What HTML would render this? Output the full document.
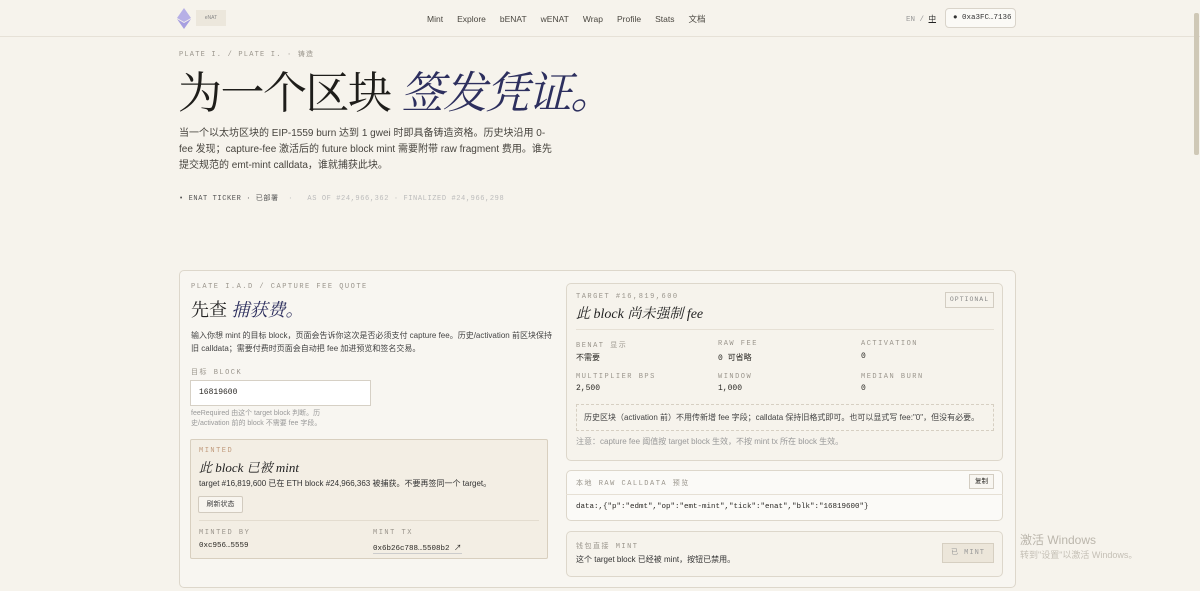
<!DOCTYPE html>
<html><head><meta charset="utf-8"><style>
*{box-sizing:border-box;margin:0;padding:0}
body{width:1200px;height:591px;overflow:hidden;background:#f6f3ec;font-family:"Liberation Sans","Noto Sans CJK SC",sans-serif;color:#2a2824;position:relative}
.mono{font-family:"Liberation Mono","Noto Sans CJK SC",monospace}
.serif{font-family:"Liberation Serif","Noto Serif CJK SC",serif}
.abs{position:absolute}
.lbl{font-family:"Liberation Mono","Noto Sans CJK SC",monospace;font-size:7px;letter-spacing:1.5px;color:#9a958c}
header{position:absolute;left:0;top:0;width:1200px;height:37px;border-bottom:1px solid #e6e1d7}
nav span{margin:0 7px;font-size:8.5px;color:#4a4740}
.card{position:absolute;border:1px solid #ddd7cb;border-radius:5px;background:#f6f3ec}
.v{font-size:8px;color:#2a2824}
</style></head><body>
<header>
<svg class="abs" style="left:177px;top:8px" width="14" height="21" viewBox="0 0 14 21"><polygon points="7,0 14,10 7,14 0,10" fill="#b7b0e6"/><polygon points="7,15 14,11 7,21 0,11" fill="#a79fe0"/></svg>
<div class="abs" style="left:196px;top:10px;width:30px;height:16px;background:#ece7dc;font-size:5px;color:#888;line-height:16px;text-align:center">eNAT</div>
<nav class="abs" style="left:420px;top:12px;line-height:12px"><span>Mint</span><span>Explore</span><span>bENAT</span><span>wENAT</span><span>Wrap</span><span>Profile</span><span>Stats</span><span>文档</span></nav>
<div class="abs mono" style="left:906px;top:13px;font-size:7.5px;color:#999">EN / <span style="color:#222;text-decoration:underline">中</span></div>
<div class="abs mono" style="left:945px;top:8px;width:71px;height:20px;border:1px solid #d9d4ca;border-radius:4px;background:#fbfaf6;font-size:7.5px;line-height:18px;padding-left:7px;color:#333">● 0xa3FC…7136</div>
</header>
<div class="abs" style="left:1194px;top:13px;width:5px;height:142px;background:#cfc8b6;border-radius:2px"></div>
<div class="abs lbl" style="left:179px;top:49px;letter-spacing:1.2px">PLATE I. / PLATE I. · 铸造</div>
<div class="abs" style="left:178px;top:62px;font-size:44px;line-height:54px;font-family:'Noto Serif CJK SC',serif;color:#1e1d1a;letter-spacing:-1.5px">为一个区块 <span style="color:#2d2f5e;font-style:italic">签发凭证。</span></div>
<div class="abs" style="left:179px;top:126px;width:378px;font-size:10px;line-height:16px;color:#47443e">当一个以太坊区块的 EIP-1559 burn 达到 1 gwei 时即具备铸造资格。历史块沿用 0-fee 发现；capture-fee 激活后的 future block mint 需要附带 raw fragment 费用。谁先提交规范的 emt-mint calldata，谁就捕获此块。</div>
<div class="abs mono" style="left:179px;top:193px;font-size:7px;letter-spacing:0.6px;color:#555">• ENAT TICKER · 已部署 <span style="color:#bbb">&nbsp;·&nbsp;&nbsp; AS OF #24,966,362 · FINALIZED #24,966,298</span></div>

<div class="card" style="left:179px;top:270px;width:837px;height:318px;background:#f8f6f1"></div>
<div class="abs lbl" style="left:191px;top:283px">PLATE I.A.D / CAPTURE FEE QUOTE</div>
<div class="abs serif" style="left:191px;top:296px;font-size:18px;color:#222">先查 <i style="color:#2d2f5e">捕获费。</i></div>
<div class="abs" style="left:191px;top:329px;width:365px;font-size:8px;line-height:13px;color:#444">输入你想 mint 的目标 block，页面会告诉你这次是否必须支付 capture fee。历史/activation 前区块保持旧 calldata；需要付费时页面会自动把 fee 加进预览和签名交易。</div>
<div class="abs lbl" style="left:191px;top:367px">目标 BLOCK</div>
<div class="abs mono" style="left:190px;top:380px;width:181px;height:26px;border:1px solid #d6d0c5;background:#fff;font-size:8px;line-height:24px;padding-left:8px">16819600</div>
<div class="abs" style="left:191px;top:409px;width:150px;font-size:7px;line-height:10px;color:#999">feeRequired 由这个 target block 判断。历史/activation 前的 block 不需要 fee 字段。</div>
<div class="card" style="left:190px;top:439px;width:358px;height:120px;background:#f3eee4;border-color:#d8cfbf;border-radius:2px"></div>
<div class="abs lbl" style="left:199px;top:447px;color:#c09a7c">MINTED</div>
<div class="abs serif" style="left:199px;top:457px;font-size:13px;font-style:italic;color:#222">此 block 已被 mint</div>
<div class="abs" style="left:199px;top:478px;font-size:8px;color:#333">target #16,819,600 已在 ETH block #24,966,363 被捕获。不要再签同一个 target。</div>
<div class="abs" style="left:198px;top:496px;width:45px;height:17px;border:1px solid #d2cbbf;background:#f8f5ef;border-radius:2px;font-size:7px;line-height:15px;text-align:center;color:#444">刷新状态</div>
<div class="abs" style="left:199px;top:520px;width:340px;border-top:1px solid #e3dccf"></div>
<div class="abs lbl" style="left:199px;top:529px">MINTED BY</div>
<div class="abs mono" style="left:199px;top:542px;font-size:7.5px">0xc956…5559</div>
<div class="abs lbl" style="left:373px;top:529px">MINT TX</div>
<div class="abs mono" style="left:373px;top:542px;font-size:7.5px;border-bottom:1px solid #ccc">0x6b26c788…5508b2 ↗</div>

<div class="card" style="left:566px;top:283px;width:437px;height:178px"></div>
<div class="abs lbl" style="left:576px;top:293px">TARGET #16,819,600</div>
<div class="abs serif" style="left:576px;top:303px;font-size:14px;font-style:italic;color:#222">此 block 尚未强制 fee</div>
<div class="abs mono" style="left:945px;top:292px;width:49px;height:16px;border:1px solid #d3cdc2;font-size:6.5px;letter-spacing:1px;line-height:14px;text-align:center;color:#888">OPTIONAL</div>
<div class="abs" style="left:576px;top:329px;width:418px;border-top:1px solid #e6e0d5"></div>
<div class="abs lbl" style="left:576px;top:340px">BENAT 显示</div><div class="abs v" style="left:576px;top:352px">不需要</div>
<div class="abs lbl" style="left:718px;top:340px">RAW FEE</div><div class="abs v mono" style="left:718px;top:352px">0 可省略</div>
<div class="abs lbl" style="left:861px;top:340px">ACTIVATION</div><div class="abs v mono" style="left:861px;top:352px">0</div>
<div class="abs lbl" style="left:576px;top:373px">MULTIPLIER BPS</div><div class="abs v mono" style="left:576px;top:384px">2,500</div>
<div class="abs lbl" style="left:718px;top:373px">WINDOW</div><div class="abs v mono" style="left:718px;top:384px">1,000</div>
<div class="abs lbl" style="left:861px;top:373px">MEDIAN BURN</div><div class="abs v mono" style="left:861px;top:384px">0</div>
<div class="abs" style="left:576px;top:404px;width:418px;height:27px;border:1px dashed #d6cfc2;font-size:8px;line-height:25px;padding-left:7px;color:#444">历史区块（activation 前）不用传新增 fee 字段；calldata 保持旧格式即可。也可以显式写 fee:"0"，但没有必要。</div>
<div class="abs" style="left:576px;top:436px;font-size:8px;color:#999">注意：capture fee 阈值按 target block 生效，不按 mint tx 所在 block 生效。</div>

<div class="card" style="left:566px;top:470px;width:437px;height:51px;background:#fbfaf7"></div>
<div class="abs" style="left:566px;top:494px;width:437px;border-top:1px solid #e6e0d5"></div>
<div class="abs lbl" style="left:576px;top:478px">本地 RAW CALLDATA 预览</div>
<div class="abs" style="left:969px;top:474px;width:25px;height:15px;border:1px solid #d3cdc2;font-size:6.5px;line-height:13px;text-align:center;background:#f8f6f1">复制</div>
<div class="abs mono" style="left:576px;top:503px;font-size:7.5px">data:,{"p":"edmt","op":"emt-mint","tick":"enat","blk":"16819600"}</div>

<div class="card" style="left:566px;top:531px;width:437px;height:46px"></div>
<div class="abs lbl" style="left:576px;top:541px">钱包直接 MINT</div>
<div class="abs" style="left:576px;top:554px;font-size:8px;color:#333">这个 target block 已经被 mint，按钮已禁用。</div>
<div class="abs mono" style="left:942px;top:543px;width:52px;height:20px;border:1px solid #d6cfc1;background:#ece6da;font-size:7px;letter-spacing:1px;line-height:18px;text-align:center;color:#999">已 MINT</div>

<div class="abs" style="left:1020px;top:531px;font-size:12px;color:#bbb6ac">激活 Windows</div>
<div class="abs" style="left:1020px;top:548px;font-size:9px;color:#c4bfb5">转到"设置"以激活 Windows。</div>
</body></html>
